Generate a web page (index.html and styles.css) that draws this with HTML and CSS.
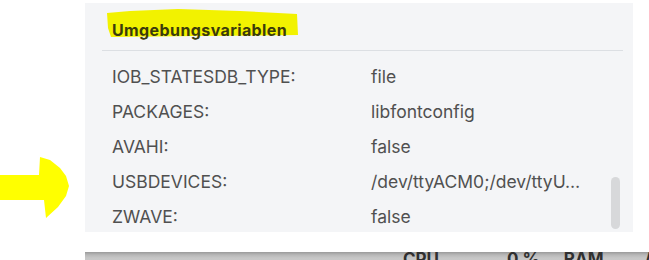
FILE: index.html
```html
<!DOCTYPE html>
<html lang="de">
<head>
<meta charset="utf-8">
<title>Umgebungsvariablen</title>
<link rel="stylesheet" href="styles.css">
</head>
<body>
<div class="page">
  <svg class="arrow" width="72" height="66" viewBox="0 0 72 66" aria-hidden="true">
    <polygon fill="#ffff00" points="0,19 39,19 40,1 50,4 60,12 66,20 69,30 66,40 58,51 46,62 44,44 0,44"/>
  </svg>
  <section class="panel">
    <header class="panel-head">
      <h2 class="panel-title">
        <svg class="marker" width="196" height="30" viewBox="0 0 196 30" aria-hidden="true">
          <polygon fill="#f2f200" points="1,5 24,3 72,1 134,3 191,6 192,27 94,28 5,29 2,20"/>
        </svg>
        <span class="title-text">Umgebungsvariablen</span>
      </h2>
    </header>
    <div class="divider"></div>
    <div class="rows">
      <div class="row"><span class="key">IOB_STATESDB_TYPE:</span><span class="val">file</span></div>
      <div class="row"><span class="key">PACKAGES:</span><span class="val">libfontconfig</span></div>
      <div class="row"><span class="key">AVAHI:</span><span class="val">false</span></div>
      <div class="row"><span class="key">USBDEVICES:</span><span class="val">/dev/ttyACM0;/dev/ttyU…</span></div>
      <div class="row"><span class="key">ZWAVE:</span><span class="val">false</span></div>
    </div>
    <div class="scroll-thumb"></div>
  </section>
  <footer class="stats">
    <span class="stat stat-cpu">CPU</span>
    <span class="stat stat-pct">0 %</span>
    <span class="stat stat-ram">RAM</span>
    <span class="stat stat-more">/</span>
  </footer>
</div>
</body>
</html>
```
FILE: styles.css
```css
html, body {
  margin: 0;
  padding: 0;
  background: #ffffff;
}
body {
  width: 649px;
  height: 260px;
  overflow: hidden;
  font-family: Inter, "Liberation Sans", sans-serif;
}
.page {
  position: relative;
  padding: 3px 16px 0 85px;
  height: 260px;
  box-sizing: border-box;
  display: flex;
  flex-direction: column;
  overflow: hidden;
}
.arrow {
  position: absolute;
  left: 0;
  top: 156px;
}
.panel {
  position: relative;
  flex: none;
  height: 229px;
  background: #f4f5f7;
  overflow: hidden;
  padding: 0 10px 0 17px;
  box-sizing: border-box;
}
.panel-head {
  padding: 17px 0 10px 10px;
}
.panel-title {
  position: relative;
  margin: 0;
  height: 20px;
  line-height: 20px;
  font-size: 16px;
  font-weight: 700;
  letter-spacing: 0.4px;
  color: #3b3b0c;
}
.marker {
  position: absolute;
  left: -6px;
  top: -12px;
}
.title-text {
  position: relative;
}
.divider {
  height: 1px;
  background: #dcdfe3;
}
.rows {
  padding: 8px 0 0 10px;
}
.row {
  display: flex;
  height: 35px;
  align-items: center;
  font-size: 17.5px;
  color: #505050;
  white-space: nowrap;
}
.key {
  width: 259px;
  flex: none;
}
.val {
  flex: none;
}
.scroll-thumb {
  position: absolute;
  right: 13px;
  top: 174px;
  width: 9px;
  height: 52px;
  border-radius: 5px;
  background: #d7d8da;
}
.stats {
  flex: none;
  margin: 20px -16px 0 0;
  height: 8px;
  overflow: hidden;
  background: linear-gradient(#9a9a9a 0px, #b8b8b8 3px, #c6c6c6 6px, #c8c8c8 100%);
  display: flex;
  align-items: flex-start;
  font-size: 17px;
  font-weight: 700;
  color: #303030;
  line-height: 14px;
  white-space: nowrap;
}
.stat-cpu { margin-left: 318px; }
.stat-pct { margin-left: 68px; }
.stat-ram { margin-left: 24px; }
.stat-more { margin-left: 41px; }
```
